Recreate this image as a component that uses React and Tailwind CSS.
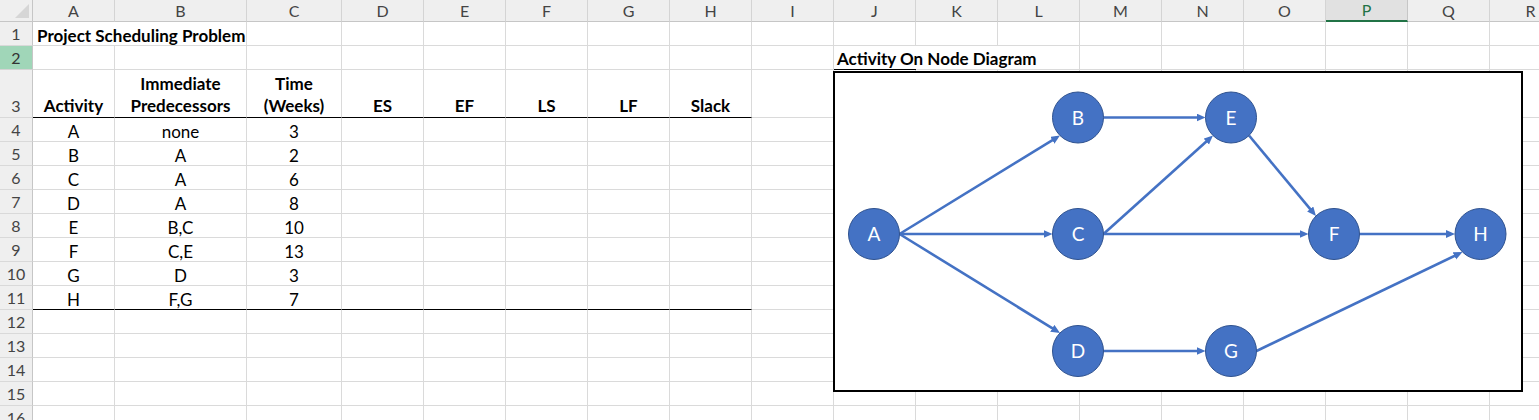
import React from "react";

const LETTERS = ["A","B","C","D","E","F","G","H","I","J","K","L","M","N","O","P","Q","R"];
const WCLS = ["w-[82px]","w-[132px]","w-[95px]","w-[82px]","w-[82px]","w-[82px]","w-[82px]","w-[82px]","w-[82px]","w-[82px]","w-[82px]","w-[82px]","w-[82px]","w-[82px]","w-[82px]","w-[82px]","w-[82px]","w-[82px]"];

const tableData = {
  4: ["A", "none", "3"],
  5: ["B", "A", "2"],
  6: ["C", "A", "6"],
  7: ["D", "A", "8"],
  8: ["E", "B,C", "10"],
  9: ["F", "C,E", "13"],
  10: ["G", "D", "3"],
  11: ["H", "F,G", "7"],
};
const heads = ["Activity", "Immediate Predecessors", "Time (Weeks)", "ES", "EF", "LS", "LF", "Slack"];

function HeaderRow() {
  return (
    <div className="flex h-[22px] shrink-0">
      <div className="relative w-[33px] shrink-0 box-border bg-[#efefef] border-r border-b border-[#c6c6c6]">
        <svg className="absolute right-[3px] bottom-[3px]" width="14" height="14" viewBox="0 0 14 14">
          <polygon points="14,0 14,14 0,14" fill="#d6d6d6" />
        </svg>
      </div>
      {LETTERS.map((l, i) => {
        const sel = l === "P";
        return (
          <div
            key={l}
            className={
              WCLS[i] +
              " shrink-0 box-border flex items-center justify-center text-[16px] " +
              (sel
                ? "bg-[#e1e1e1] border-r border-[#c6c6c6] border-b-2 border-b-[#217346] text-[#217346]"
                : "bg-[#efefef] border-r border-b border-[#d4d4d4] border-b-[#c6c6c6] text-[#444444]")
            }
          >
            {l}
          </div>
        );
      })}
    </div>
  );
}

function Row({ n }) {
  const tall = n === 3;
  const sel = n === 2;
  return (
    <div className={(tall ? "h-[48px]" : "h-[24px]") + " flex shrink-0"}>
      <div
        className={
          "w-[33px] shrink-0 box-border flex items-end justify-center pb-[1px] leading-5 text-[16px] border-r border-b " +
          (sel ? "bg-[#a0d6b8] border-[#c6c6c6] border-b-[#d4d4d4] text-[#333333]" : "bg-[#efefef] border-[#c6c6c6] border-b-[#d9d9d9] text-[#444444]")
        }
      >
        {n}
      </div>
      {LETTERS.map((l, i) => {
        let content = null;
        let cls = "justify-center leading-[18px]";
        let rb = "border-r";
        let bb = "border-b-[#dadada]";
        if (n === 1 && i === 0) {
          content = "Project Scheduling Problem";
          cls = "justify-start pl-[4px] whitespace-nowrap font-bold leading-[18px]";
          rb = "border-r-0";
        }
        if (n === 2 && i === 9) {
          content = "Activity On Node Diagram";
          cls = "justify-start pl-[3px] whitespace-nowrap font-bold leading-5";
          rb = "border-r-0";
          bb = "border-b-black";
        }
        if (n === 2 && i === 10) rb = "border-r-0";
        if (n === 3 && i < 8) {
          content = heads[i];
          cls = "justify-center text-center font-bold leading-[22px] px-[2px]";
          bb = "border-b-black";
        }
        if (tableData[n] && i < 3) content = tableData[n][i];
        if (n === 11 && i < 8) bb = "border-b-black";
        return (
          <div
            key={l}
            className={
              WCLS[i] +
              " shrink-0 box-border flex items-end pb-0 text-[17px] text-black border-b border-[#dadada] " +
              rb + " " + bb + " " + cls
            }
          >
            {content}
          </div>
        );
      })}
    </div>
  );
}

const R = 25.5;
const D45 = 18.03;
const nodes = {
  A: [874, 234],
  B: [1078, 117.5],
  C: [1078, 234],
  D: [1078, 351],
  E: [1231, 117.5],
  F: [1334, 234],
  G: [1231, 351],
  H: [1480.5, 234],
};
const pt = (id, dir) => {
  const [x, y] = nodes[id];
  switch (dir) {
    case "E": return [x + R, y];
    case "W": return [x - R, y];
    case "SW": return [x - D45, y + D45];
    case "NW": return [x - D45, y - D45];
    case "SE": return [x + D45, y + D45];
    default: return [x, y];
  }
};
const edges = [
  ["A", "E", "B", "SW"],
  ["A", "E", "C", "W"],
  ["A", "E", "D", "NW"],
  ["B", "E", "E", "W"],
  ["C", "E", "E", "SW"],
  ["C", "E", "F", "W"],
  ["E", "SE", "F", "NW"],
  ["F", "E", "H", "W"],
  ["D", "E", "G", "W"],
  ["G", "E", "H", "SW"],
];

function Diagram() {
  return (
    <>
      <div className="absolute left-[833px] top-[71px] w-[690px] h-[321px] box-border border-2 border-black bg-white" />
      <svg className="absolute left-0 top-0" width="1539" height="420" viewBox="0 0 1539 420">
        <defs>
          <marker id="arr" markerUnits="userSpaceOnUse" markerWidth="12" markerHeight="10" refX="5" refY="4" orient="auto">
            <path d="M0,0 L9,4 L0,8 Z" fill="#4472c4" />
          </marker>
        </defs>
        {edges.map(([a, ad, b, bd], i) => {
          const [x1, y1] = pt(a, ad);
          const [tx, ty] = pt(b, bd);
          const dx = tx - x1, dy = ty - y1;
          const len = Math.hypot(dx, dy);
          const x2 = tx - (dx / len) * 4;
          const y2 = ty - (dy / len) * 4;
          return (
            <line key={i} x1={x1} y1={y1} x2={x2} y2={y2} stroke="#4472c4" strokeWidth="2.6" markerEnd="url(#arr)" />
          );
        })}
        {Object.entries(nodes).map(([id, [x, y]]) => (
          <g key={id}>
            <circle cx={x} cy={y} r={R} fill="#4472c4" stroke="#2f528f" strokeWidth="1" />
            <text x={x} y={y + 7} textAnchor="middle" fill="#ffffff" fontSize="19" fontFamily="Lato, sans-serif">
              {id}
            </text>
          </g>
        ))}
      </svg>
    </>
  );
}

export default function App() {
  const rows = Array.from({ length: 16 }, (_, i) => i + 1);
  return (
    <div className="relative w-[1539px] h-[420px] overflow-hidden bg-white font-[Lato,sans-serif]">
      <div className="flex flex-col">
        <HeaderRow />
        {rows.map((n) => (
          <Row key={n} n={n} />
        ))}
      </div>
      <Diagram />
    </div>
  );
}
